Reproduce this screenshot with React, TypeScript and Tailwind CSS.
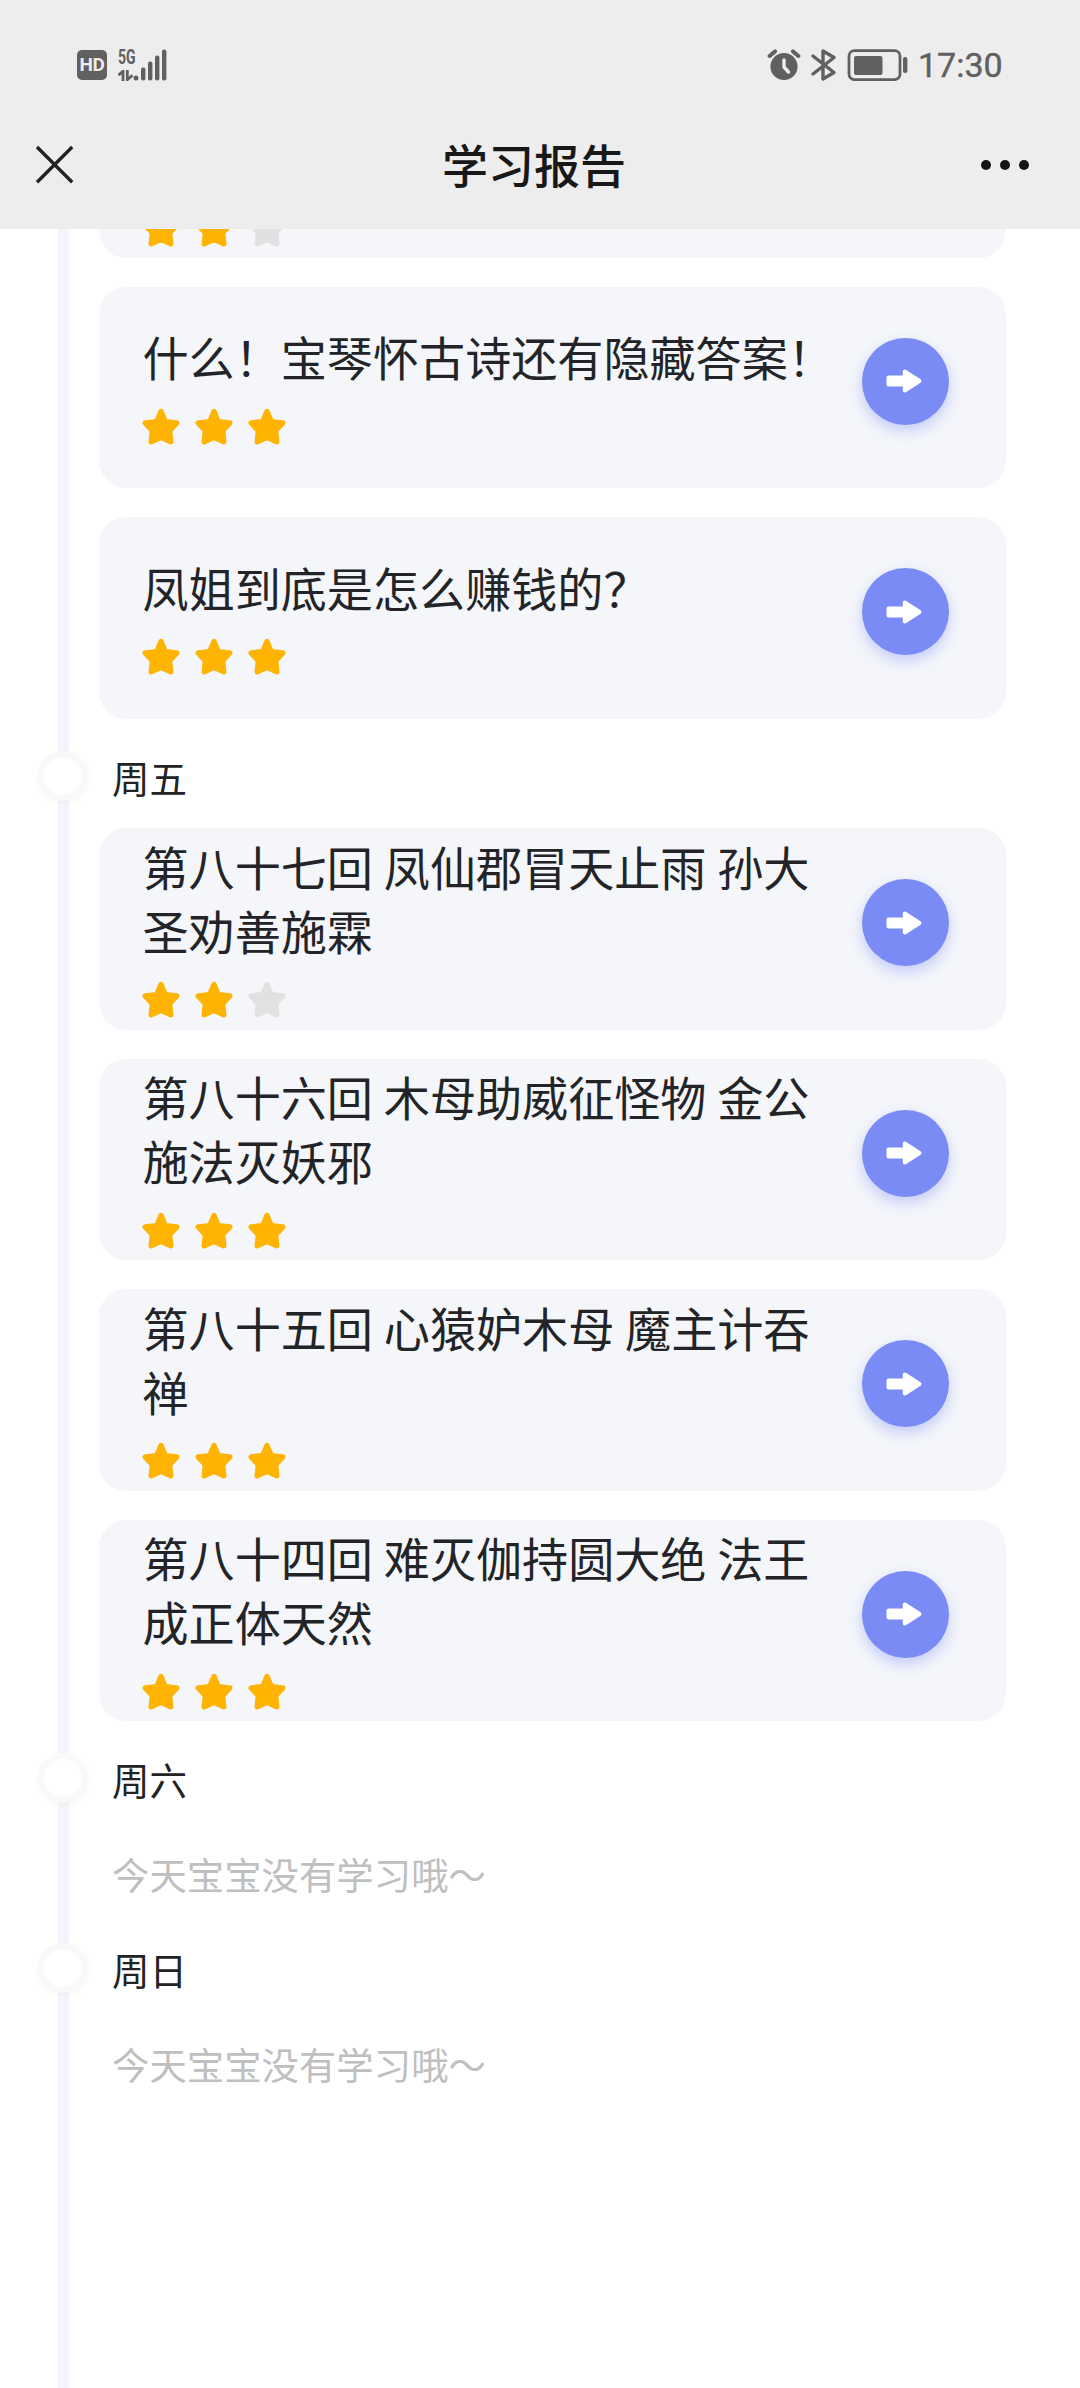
import { Fragment } from 'react';
import clsx from 'clsx';

interface Lesson {
  title: string;
  stars: number;
}

interface Day {
  label: string;
  lessons: Lesson[];
}

const thursdayLessons: Lesson[] = [
  { title: '什么！宝琴怀古诗还有隐藏答案！', stars: 3 },
  { title: '凤姐到底是怎么赚钱的？', stars: 3 },
];

const days: Day[] = [
  {
    label: '周五',
    lessons: [
      { title: '第八十七回 凤仙郡冒天止雨 孙大圣劝善施霖', stars: 2 },
      { title: '第八十六回 木母助威征怪物 金公施法灭妖邪', stars: 3 },
      { title: '第八十五回 心猿妒木母 魔主计吞禅', stars: 3 },
      { title: '第八十四回 难灭伽持圆大绝 法王成正体天然', stars: 3 },
    ],
  },
  { label: '周六', lessons: [] },
  { label: '周日', lessons: [] },
];

function StatusBar() {
  return (
    <div className="flex h-[130px] items-center justify-between pl-[77px] pr-[78px] text-[#606060]">
      <div className="flex items-center">
        <div className="flex h-[30px] w-[30px] items-center justify-center rounded-[5px] bg-[#606060] font-['Roboto',sans-serif] text-[19px] font-bold tracking-[-0.5px] text-[#ededed]">
          HD
        </div>
        <div className="ml-[11px] flex h-[32px] flex-col justify-between">
          <span className="w-[17px] origin-left scale-x-[0.7] font-['Roboto',sans-serif] text-[20px] font-bold leading-[16px]">
            5G
          </span>
          <svg width="16" height="11" viewBox="0 0 16 11" fill="none" stroke="currentColor" strokeWidth="2.8">
            <path d="M0.5 5.2 L5 1.2 V11" />
            <path d="M9.3 0 V9.8 L14.5 5.2" />
          </svg>
        </div>
        <svg className="-ml-[2px]" width="34" height="32" viewBox="0 0 34 32" fill="currentColor">
          <circle cx="3" cy="29" r="2.5" />
          <rect x="8" y="18.5" width="4.4" height="13" rx="2" />
          <rect x="15" y="12.5" width="4.4" height="19" rx="2" />
          <rect x="22" y="6.5" width="4.4" height="25" rx="2" />
          <rect x="29" y="0.5" width="4.4" height="31" rx="2" />
        </svg>
      </div>
      <div className="flex items-center">
        <svg width="34" height="34" viewBox="0 0 34 34" fill="none">
          <circle cx="17" cy="18.5" r="13.6" fill="#606060" />
          <path d="M2.6 8 L8 3.4 M31.4 8 L26 3.4" stroke="#606060" strokeWidth="4" strokeLinecap="round" />
          <path d="M17 12 V19 L21.5 24" stroke="#ededed" strokeWidth="3.4" strokeLinecap="round" strokeLinejoin="round" />
        </svg>
        <svg
          className="ml-[9px]"
          width="27"
          height="34"
          viewBox="0 0 27 34"
          fill="none"
          stroke="currentColor"
          strokeWidth="3.4"
          strokeLinejoin="round"
          strokeLinecap="round"
        >
          <path d="M3 8 L24 24.5 L13 31 V3 L24 9.5 L3 26" />
        </svg>
        <svg className="ml-[10px]" width="62" height="34" viewBox="0 0 62 34" fill="none">
          <rect x="2" y="2.6" width="51" height="29" rx="5.5" stroke="#606060" strokeWidth="2.8" />
          <rect x="7" y="8" width="28.5" height="19" rx="2" fill="#606060" />
          <rect x="56" y="9" width="4.4" height="16" rx="2" fill="#606060" />
        </svg>
        <span className="ml-[9px] w-[84px] whitespace-nowrap font-['Roboto',sans-serif] text-[34px] leading-[34px] [-webkit-text-stroke:0.4px_#606060]">
          17:30
        </span>
      </div>
    </div>
  );
}

function TitleBar() {
  return (
    <div className="flex h-[99px] items-start justify-between px-[35px]">
      <svg className="mt-[15px]" width="40" height="40" viewBox="0 0 40 40" stroke="#222" strokeWidth="3.4">
        <path d="M2 2 L37.2 37.2 M37.2 2 L2 37.2" />
      </svg>
      <h1 className="ml-[12px] text-[46px] font-medium leading-[66px] text-[#181818]">学习报告</h1>
      <div className="mr-[16px] mt-[29.5px] flex gap-[9px]">
        <span className="h-[10px] w-[10px] rounded-full bg-[#151515]" />
        <span className="h-[10px] w-[10px] rounded-full bg-[#151515]" />
        <span className="h-[10px] w-[10px] rounded-full bg-[#151515]" />
      </div>
    </div>
  );
}

function Star({ filled }: { filled: boolean }) {
  return (
    <svg
      className={clsx('h-[38px] w-[38px]', filled ? 'text-[#ffb302]' : 'text-[#e1e1e1]')}
      viewBox="0 0 38 38"
      fill="currentColor"
      stroke="currentColor"
      strokeWidth="5.4"
      strokeLinejoin="round"
    >
      <path d="M19 3.6 L23.2 13.6 L34.8 14.9 L27.6 22.8 L28.8 33.8 L19 29.4 L9.2 33.8 L10.4 22.8 L3.2 14.9 L14.8 13.6 Z" />
    </svg>
  );
}

function Stars({ count }: { count: number }) {
  return (
    <div className="flex gap-[15.3px]">
      {[1, 2, 3].map((n) => (
        <Star key={n} filled={n <= count} />
      ))}
    </div>
  );
}

function LessonCard({ title, stars }: Lesson) {
  return (
    <div className="flex h-[201.5px] items-center justify-between rounded-[27px] bg-[#f4f6fa] pl-[43.5px] pr-[57.5px]">
      <div className="w-[700px]">
        <p className="text-[46.1px] leading-[64px] text-[#232427] [word-spacing:0.5px]">{title}</p>
        <div className="-ml-[1px] mb-[4.5px] mt-[19.5px]">
          <Stars count={stars} />
        </div>
      </div>
      <button className="mb-[12px] flex h-[87px] w-[87px] shrink-0 items-center justify-center rounded-full bg-[#7a8bf5] shadow-[0_6px_14px_rgba(122,139,245,0.4)]">
        <svg className="-ml-[3px]" width="38" height="26" viewBox="0 0 38 26" fill="#fff" stroke="#fff" strokeWidth="4" strokeLinejoin="round">
          <path d="M3.5 9.5 H19.8 V3.5 L34.5 13 L19.8 22.5 V16.5 H3.5 Z" />
        </svg>
      </button>
    </div>
  );
}

function DayLabel({ label }: { label: string }) {
  return (
    <div className="relative flex h-[109.5px] items-center pl-[13px] pt-[7px]">
      {/* timeline node, sits over the vertical line */}
      <span className="absolute -left-[61.5px] top-[32px] h-[50px] w-[50px] rounded-full border-[6px] border-[#f9f9f9] bg-white shadow-[0_2px_6px_rgba(0,0,0,0.04)]" />
      <h2 className="text-[37.5px] leading-[52px] text-[#232323]">{label}</h2>
    </div>
  );
}

export default function App() {
  return (
    <div className="flex h-[2388px] w-[1080px] flex-col overflow-hidden bg-white font-['Noto_Sans_CJK_SC',sans-serif]">
      <header className="shrink-0 bg-[#ededed]">
        <StatusBar />
        <TitleBar />
      </header>
      <main className="flex min-h-0 flex-1 overflow-hidden">
        <div className="ml-[57.5px] w-[11.5px] shrink-0 bg-[#f4f4fb]" />
        <div className="ml-[30px] w-[907px]">
          {/* tail of the card scrolled under the header */}
          <div className="flex h-[28.5px] flex-col justify-end overflow-hidden rounded-b-[27px] bg-[#f4f6fa] pb-[10px] pl-[42.5px]">
            <Stars count={2} />
          </div>
          <div className="mt-[29px] flex flex-col gap-[29px]">
            {thursdayLessons.map((lesson) => (
              <LessonCard key={lesson.title} {...lesson} />
            ))}
          </div>
          {days.map((day) => (
            <Fragment key={day.label}>
              <DayLabel label={day.label} />
              {day.lessons.length > 0 ? (
                <div className="flex flex-col gap-[29px]">
                  {day.lessons.map((lesson) => (
                    <LessonCard key={lesson.title} {...lesson} />
                  ))}
                </div>
              ) : (
                <p className="h-[80.5px] pl-[13px] pt-[17.5px] text-[37.4px] leading-[52px] text-[#bfbfbf]">
                  今天宝宝没有学习哦～
                </p>
              )}
            </Fragment>
          ))}
        </div>
      </main>
    </div>
  );
}
